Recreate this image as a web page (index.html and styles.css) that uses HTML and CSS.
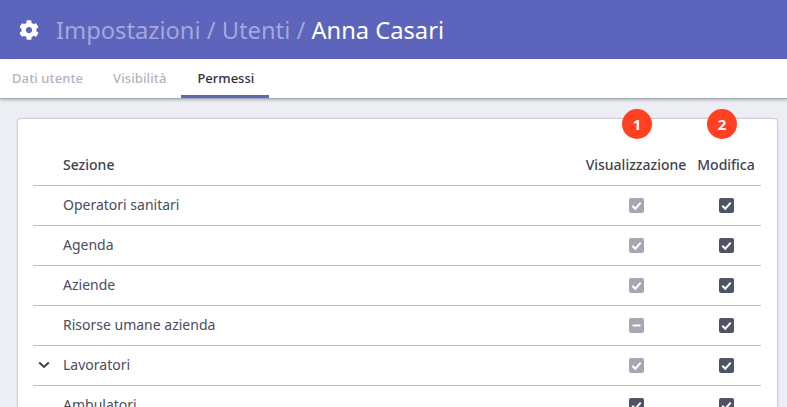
FILE: index.html
```html
<!DOCTYPE html>
<html lang="it">
<head>
  <meta charset="UTF-8">
  <title>Anna Casari - Permessi</title>
  <link rel="stylesheet" href="styles.css">
</head>
<body>
  <header class="topbar">
    <svg class="gear" viewBox="0 0 512 512" aria-hidden="true"><path d="M487.4 315.7l-42.6-24.6c4.3-23.2 4.3-47 0-70.2l42.6-24.6c4.9-2.8 7.1-8.6 5.5-14-11.1-35.6-30-67.8-54.7-94.6-3.8-4.1-10-5.1-14.8-2.3L380.8 110c-17.9-15.4-38.5-27.3-60.8-35.1V25.8c0-5.6-3.9-10.5-9.4-11.7-36.7-8.2-74.3-7.8-109.2 0-5.5 1.2-9.4 6.1-9.4 11.7V75c-22.2 7.9-42.8 19.8-60.8 35.1L88.7 85.5c-4.9-2.8-11-1.9-14.8 2.3-24.7 26.7-43.6 58.9-54.7 94.6-1.7 5.4.6 11.2 5.5 14L67.3 221c-4.3 23.2-4.3 47 0 70.2l-42.6 24.6c-4.9 2.8-7.1 8.6-5.5 14 11.1 35.6 30 67.8 54.7 94.6 3.8 4.1 10 5.1 14.8 2.3l42.6-24.6c17.9 15.4 38.5 27.3 60.8 35.1v49.2c0 5.6 3.9 10.5 9.4 11.7 36.7 8.2 74.3 7.8 109.2 0 5.5-1.2 9.4-6.1 9.4-11.7v-49.2c22.2-7.9 42.8-19.8 60.8-35.1l42.6 24.6c4.9 2.8 11 1.9 14.8-2.3 24.7-26.7 43.6-58.9 54.7-94.6 1.5-5.5-.7-11.3-5.6-14.1zM256 336c-44.1 0-80-35.9-80-80s35.9-80 80-80 80 35.9 80 80-35.9 80-80 80z"/></svg>
    <h1 class="crumbs">Impostazioni / Utenti / <span class="crumbs-current">Anna Casari</span></h1>
  </header>

  <nav class="tabs">
    <a class="tab">Dati utente</a>
    <a class="tab">Visibilità</a>
    <a class="tab tab-active">Permessi</a>
  </nav>

  <main class="content">
    <section class="card">
      <div class="row row-head">
        <span></span>
        <span>Sezione</span>
        <span class="col-title">Visualizzazione<b class="badge badge-one">1</b></span>
        <span class="col-title">Modifica<b class="badge badge-two">2</b></span>
      </div>

      <div class="row">
        <span></span>
        <span>Operatori sanitari</span>
        <span class="box box-off"><svg viewBox="0 0 15 15"><path class="tick" d="M3.3 7.8l3 2.9 5.4-6"/></svg></span>
        <span class="box"><svg viewBox="0 0 15 15"><path class="tick" d="M3.3 7.8l3 2.9 5.4-6"/></svg></span>
      </div>
      <div class="row">
        <span></span>
        <span>Agenda</span>
        <span class="box box-off"><svg viewBox="0 0 15 15"><path class="tick" d="M3.3 7.8l3 2.9 5.4-6"/></svg></span>
        <span class="box"><svg viewBox="0 0 15 15"><path class="tick" d="M3.3 7.8l3 2.9 5.4-6"/></svg></span>
      </div>
      <div class="row">
        <span></span>
        <span>Aziende</span>
        <span class="box box-off"><svg viewBox="0 0 15 15"><path class="tick" d="M3.3 7.8l3 2.9 5.4-6"/></svg></span>
        <span class="box"><svg viewBox="0 0 15 15"><path class="tick" d="M3.3 7.8l3 2.9 5.4-6"/></svg></span>
      </div>
      <div class="row">
        <span></span>
        <span>Risorse umane azienda</span>
        <span class="box box-off"><svg viewBox="0 0 15 15"><path class="tick" d="M3.5 7.5h8"/></svg></span>
        <span class="box"><svg viewBox="0 0 15 15"><path class="tick" d="M3.3 7.8l3 2.9 5.4-6"/></svg></span>
      </div>
      <div class="row">
        <svg class="chevron" viewBox="0 0 12 8"><path d="M1.2 1.5L6 6l4.8-4.5"/></svg>
        <span>Lavoratori</span>
        <span class="box box-off"><svg viewBox="0 0 15 15"><path class="tick" d="M3.3 7.8l3 2.9 5.4-6"/></svg></span>
        <span class="box"><svg viewBox="0 0 15 15"><path class="tick" d="M3.3 7.8l3 2.9 5.4-6"/></svg></span>
      </div>
      <div class="row">
        <span></span>
        <span>Ambulatori</span>
        <span class="box"><svg viewBox="0 0 15 15"><path class="tick" d="M3.3 7.8l3 2.9 5.4-6"/></svg></span>
        <span class="box"><svg viewBox="0 0 15 15"><path class="tick" d="M3.3 7.8l3 2.9 5.4-6"/></svg></span>
      </div>
    </section>
  </main>
</body>
</html>
```
FILE: styles.css
```css
* { box-sizing: border-box; margin: 0; padding: 0; }
html, body { height: 100%; overflow: hidden; }
body {
  font-family: "Noto Sans", sans-serif;
  font-size: 14px;
  color: #4a4d5c;
  background: #eceef3;
}

.topbar {
  height: 59px;
  background: #5c64bb;
  display: flex;
  align-items: center;
  gap: 17px;
  padding-left: 19px;
}
.gear { width: 20px; height: 20px; fill: #fff; flex: none; }
.crumbs {
  font-size: 23.7px;
  font-weight: 400;
  color: #a3a8da;
}
.crumbs-current { color: #fff; }

.tabs {
  height: 40px;
  background: #fff;
  display: flex;
  padding-left: 12px;
  border-bottom: 1px solid #a9abb3;
  box-shadow: 0 1px 3px rgba(0,0,0,0.25);
  position: relative;
}
.tab {
  font-size: 13px;
  font-weight: 500;
  letter-spacing: 0.1px;
  color: #b0b3c2;
  line-height: 39px;
  margin-right: 30px;
}
.tab-active {
  color: #2d2f38;
  letter-spacing: 0;
  margin-left: -15px;
  padding: 0 15px 0 16px;
  border-bottom: 3px solid #5c64bb;
  height: 39px;
}

.content { padding: 20px 10px 0 18px; }
.card {
  background: #fff;
  border-radius: 3px;
  box-shadow: 0 0 2px rgba(0,0,0,0.5);
  padding: 27px 16px 0 15px;
}
.row {
  display: grid;
  grid-template-columns: 30px 1fr 110px 70px;
  align-items: center;
  height: 40px;
  padding-bottom: 2px;
  border-bottom: 1px solid #bdbec8;
}
.row-head {
  font-weight: 500;
  color: #3f424f;
}
.col-title { text-align: center; position: relative; white-space: nowrap; }

.badge {
  position: absolute;
  top: -46px;
  width: 30px;
  height: 30px;
  border-radius: 50%;
  background: #ff4122;
  color: #fff;
  font-size: 15px;
  font-weight: 700;
  line-height: 30px;
  text-align: center;
}
.badge-one { left: 41px; }
.badge-two { left: 16px; }

.box {
  justify-self: center;
  width: 15px;
  height: 15px;
  margin-top: 1px;
  border-radius: 2px;
  background: #4f5366;
}
.box svg { display: block; width: 15px; height: 15px; }
.box-off { background: #a5a7b2; }
.tick { fill: none; stroke: #fff; stroke-width: 2; }

.chevron {
  width: 12px;
  height: 8px;
  margin-left: 5px;
  margin-top: 1px;
  fill: none;
  stroke: #3f424f;
  stroke-width: 2;
}
```
